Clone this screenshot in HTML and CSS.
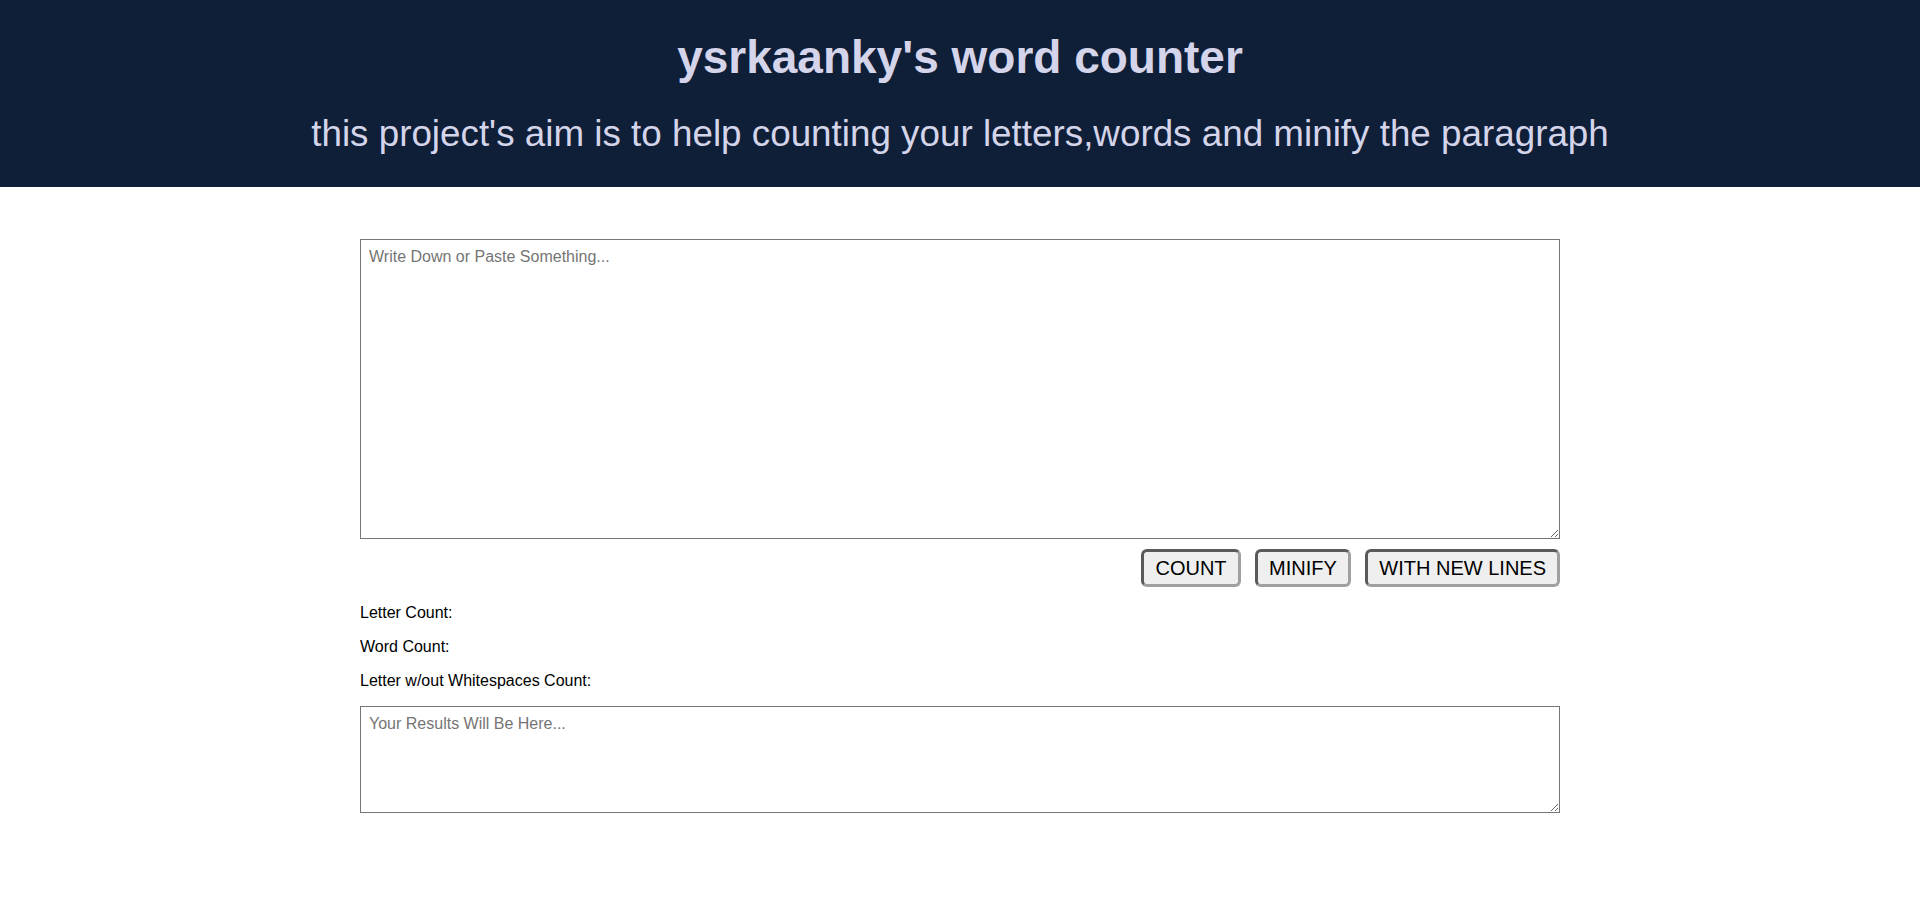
FILE: index.html
```html
<!DOCTYPE html>
<html lang="en">
<head>
<meta charset="utf-8">
<title>ysrkaanky's word counter</title>
<link rel="stylesheet" href="styles.css">
</head>
<body>
<header class="site-header">
  <h1 class="title">ysrkaanky's word counter</h1>
  <h2 class="subtitle">this project's aim is to help counting your letters,words and minify the paragraph</h2>
</header>
<main class="container">
  <textarea class="input-area" placeholder="Write Down or Paste Something..."></textarea>
  <div class="actions">
    <button class="btn">COUNT</button>
    <button class="btn">MINIFY</button>
    <button class="btn">WITH NEW LINES</button>
  </div>
  <div class="stats">
    <p class="stat">Letter Count:</p>
    <p class="stat">Word Count:</p>
    <p class="stat">Letter w/out Whitespaces Count:</p>
  </div>
  <textarea class="result-area" placeholder="Your Results Will Be Here..."></textarea>
</main>
</body>
</html>
```

FILE: styles.css
```css
* {
  box-sizing: border-box;
}

html, body {
  margin: 0;
  padding: 0;
  background: #ffffff;
  font-family: "Liberation Sans", Arial, sans-serif;
}

.site-header {
  background: #0f1f38;
  color: #d4d4ea;
  text-align: center;
  padding: 31px 0 32px;
}

.title {
  margin: 0 0 29px;
  font-size: 46px;
  font-weight: bold;
  line-height: 1.15;
}

.subtitle {
  margin: 0;
  font-size: 36.8px;
  font-weight: normal;
  line-height: 1.15;
}

.container {
  width: 1200px;
  margin: 52px auto 0;
  display: flex;
  flex-direction: column;
}

.input-area,
.result-area {
  display: block;
  width: 100%;
  border: 1px solid #767676;
  padding: 8px;
  font-family: "Liberation Sans", Arial, sans-serif;
  font-size: 16px;
  line-height: 18px;
  color: #000;
  background: #fff;
  resize: vertical;
}

.input-area::placeholder,
.result-area::placeholder {
  color: #757575;
}

.input-area {
  height: 300px;
}

.result-area {
  height: 107px;
  margin-top: 0;
}

.actions {
  display: flex;
  justify-content: flex-end;
  gap: 14.5px;
  margin-top: 10px;
}

.btn {
  font-family: "Liberation Sans", Arial, sans-serif;
  font-size: 20px;
  line-height: 23px;
  height: 38px;
  padding: 4px 11px;
  background: #efefef;
  color: #000;
  border: 3px solid;
  border-color: #5a5a5a #a0a0a0 #a0a0a0 #5a5a5a;
  border-radius: 6px;
  cursor: pointer;
}

.stats {
  margin-top: 1px;
}

.stat {
  margin: 16px 0;
  font-size: 16px;
  line-height: 18px;
  color: #000;
}
```
